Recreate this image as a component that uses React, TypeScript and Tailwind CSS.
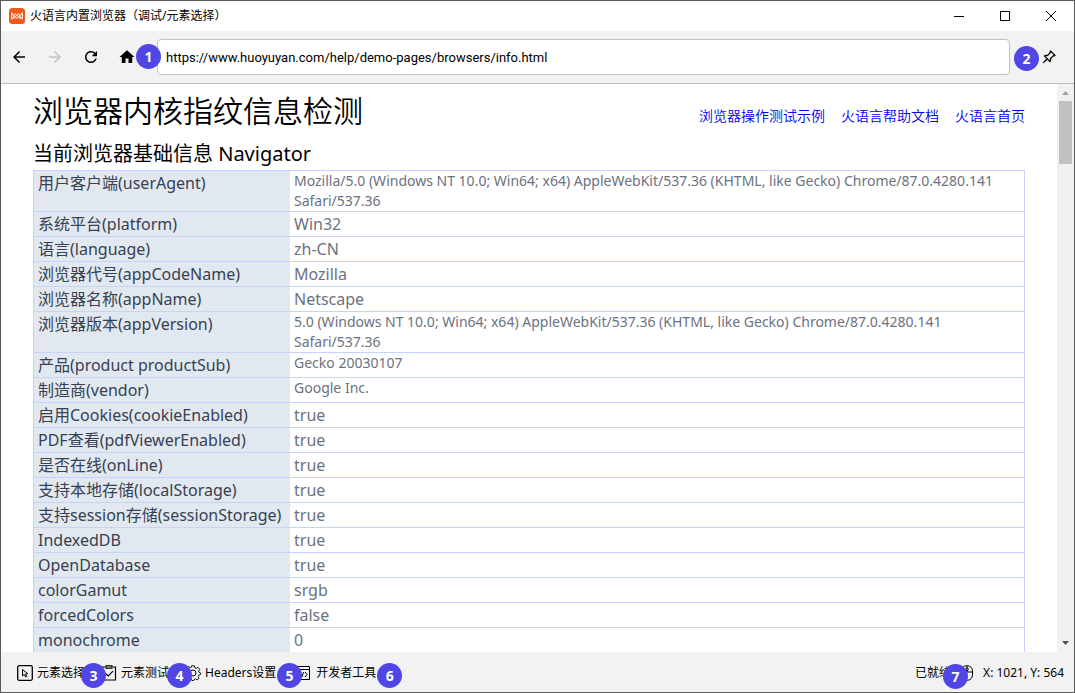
import type { ReactNode } from "react";
import { MdArrowBack, MdArrowForward, MdHome, MdRefresh } from "react-icons/md";
import { BsPinAngle } from "react-icons/bs";

type Row = { label: string; value: string; small?: boolean };

const rows: Row[] = [
  { label: "用户客户端(userAgent)", value: "Mozilla/5.0 (Windows NT 10.0; Win64; x64) AppleWebKit/537.36 (KHTML, like Gecko) Chrome/87.0.4280.141 Safari/537.36", small: true },
  { label: "系统平台(platform)", value: "Win32" },
  { label: "语言(language)", value: "zh-CN" },
  { label: "浏览器代号(appCodeName)", value: "Mozilla" },
  { label: "浏览器名称(appName)", value: "Netscape" },
  { label: "浏览器版本(appVersion)", value: "5.0 (Windows NT 10.0; Win64; x64) AppleWebKit/537.36 (KHTML, like Gecko) Chrome/87.0.4280.141 Safari/537.36", small: true },
  { label: "产品(product productSub)", value: "Gecko 20030107", small: true },
  { label: "制造商(vendor)", value: "Google Inc.", small: true },
  { label: "启用Cookies(cookieEnabled)", value: "true" },
  { label: "PDF查看(pdfViewerEnabled)", value: "true" },
  { label: "是否在线(onLine)", value: "true" },
  { label: "支持本地存储(localStorage)", value: "true" },
  { label: "支持session存储(sessionStorage)", value: "true" },
  { label: "IndexedDB", value: "true" },
  { label: "OpenDatabase", value: "true" },
  { label: "colorGamut", value: "srgb" },
  { label: "forcedColors", value: "false" },
  { label: "monochrome", value: "0" },
];

function Badge({ n, className }: { n: number; className: string }) {
  return (
    <span className={`absolute z-10 flex size-[25px] items-center justify-center rounded-full bg-[#4f46e5] font-['Open_Sans',sans-serif] text-sm leading-none font-bold text-white ${className}`}>
      {n}
    </span>
  );
}

function Logo() {
  return (
    <svg className="size-4" viewBox="0 0 16 16" aria-hidden="true">
      <rect width="16" height="16" rx="3.5" fill="#ee5a1c" />
      <path d="M2.6 11V4.8L8 10.4L13.4 4.8V11M4.9 11V7.4M11.1 11V7.4M2.6 11L4.9 9M13.4 11L11.1 9M6 5.4L8 7.6L10 5.4" fill="none" stroke="#ffe3d3" strokeWidth="1.1" strokeLinejoin="round" />
    </svg>
  );
}

function TitleBar() {
  return (
    <header className="flex h-[30px] shrink-0 items-center bg-white pl-2">
      <Logo />
      <h1 className="grow pl-[5px] text-xs">火语言内置浏览器（调试/元素选择）</h1>
      <div className="flex h-full">
        <button aria-label="最小化" className="flex w-[46px] items-center justify-center">
          <svg className="size-[10px]" viewBox="0 0 10 10"><path d="M0 5.5H10" stroke="#000" /></svg>
        </button>
        <button aria-label="最大化" className="flex w-[46px] items-center justify-center">
          <svg className="size-[10px]" viewBox="0 0 10 10"><path d="M.5 .5H9.5V9.5H.5Z" fill="none" stroke="#000" /></svg>
        </button>
        <button aria-label="关闭" className="flex w-[46px] items-center justify-center">
          <svg className="size-[10px]" viewBox="0 0 10 10"><path d="M0 0L10 10M10 0L0 10" stroke="#000" /></svg>
        </button>
      </div>
    </header>
  );
}

function AddressBar() {
  return (
    <nav className="flex h-[53px] shrink-0 items-center border-b border-[#bdbdbd] px-[9px]">
      <div className="flex gap-[18px]">
        <button aria-label="后退"><MdArrowBack size={18} /></button>
        <button aria-label="前进" disabled className="text-[#c4c4c4]"><MdArrowForward size={18} /></button>
        <button aria-label="刷新"><MdRefresh size={18} /></button>
        <button aria-label="主页"><MdHome size={18} /></button>
      </div>
      <div className="relative ml-[21px] grow">
        <Badge n={1} className="-left-[21px] top-[5px]" />
        <input
          aria-label="网址"
          defaultValue="https://www.huoyuyan.com/help/demo-pages/browsers/info.html"
          className="block h-9 w-full rounded-[4px] border border-[#c2c2c2] bg-white px-2 font-['Roboto',sans-serif] text-[13px] outline-none"
        />
      </div>
      <button aria-label="固定窗口" className="relative ml-8 mr-[9px]">
        <Badge n={2} className="-left-[28px] -top-1" />
        <BsPinAngle size={14} strokeWidth={0.6} />
      </button>
    </nav>
  );
}

function InfoPage() {
  return (
    <main className="min-w-0 grow overflow-hidden px-8 pt-[7px]">
      <div className="flex items-start justify-between">
        <h2 className="text-3xl leading-[40px] font-[350]">浏览器内核指纹信息检测</h2>
        <div className="flex gap-4 pt-[15px] text-sm font-[350] text-[#0000ee]">
          <a href="#examples">浏览器操作测试示例</a>
          <a href="#docs">火语言帮助文档</a>
          <a href="#home">火语言首页</a>
        </div>
      </div>
      <h3 className="pt-2 pb-px text-xl leading-[30px]">当前浏览器基础信息 Navigator</h3>
      <table className="w-full border-separate border-spacing-0 border-x border-t border-[#c7d2fe] text-left text-base leading-6">
        <tbody>
          {rows.map((row) => (
            <tr key={row.label}>
              <th scope="row" className="w-64 border-b border-[#c7d2fe] bg-[#e2e8f0] px-1 py-0 align-top font-normal whitespace-nowrap text-[#374151]">{row.label}</th>
              <td className={`border-b border-[#c7d2fe] px-1 py-0 align-top text-[#6b7280] ${row.small ? "text-sm leading-5" : ""}`}>{row.value}</td>
            </tr>
          ))}
        </tbody>
      </table>
    </main>
  );
}

function ScrollBar() {
  return (
    <div aria-hidden="true" className="flex w-[17px] shrink-0 flex-col items-center bg-[#f1f1f1]">
      <svg className="h-[17px] w-[17px]" viewBox="0 0 17 17"><path d="M5 11L8.5 7L12 11Z" fill="#a3a3a3" /></svg>
      <div className="h-[63px] w-[13px] bg-[#c1c1c1]" />
      <svg className="mt-auto h-[17px] w-[17px]" viewBox="0 0 17 17"><path d="M5 6L8.5 10L12 6Z" fill="#505050" /></svg>
    </div>
  );
}

function Tool({ icon, label, badge }: { icon: ReactNode; label: string; badge: ReactNode }) {
  return (
    <button className="relative flex items-center gap-1 whitespace-nowrap">
      {icon}
      {label}
      {badge}
    </button>
  );
}

function StatusBar() {
  const icon = "size-4 fill-none stroke-black";
  return (
    <footer className="flex h-10 shrink-0 items-center pt-0.5 pl-4 pr-[10px] text-xs">
      <div className="flex gap-4">
        <Tool
          label="元素选择"
          badge={<Badge n={3} className="left-16 -top-0.5" />}
          icon={<svg className={icon} viewBox="0 0 16 16"><rect x=".7" y=".7" width="14.6" height="14.6" rx="1.5" strokeWidth="1.3" /><path d="M5.5 4.5V11L7.2 9.4L8.6 12L9.8 11.4L8.5 9L10.8 8.7Z" /></svg>}
        />
        <Tool
          label="元素测试"
          badge={<Badge n={4} className="left-[66px] -top-0.5" />}
          icon={<svg className={icon} viewBox="0 0 16 16"><path d="M4 2H1.5V15H14.5V2H12M5 .8H11V3.2H5ZM4.5 8.5L7.2 11L12 6.2" strokeWidth="1.2" /></svg>}
        />
        <Tool
          label="Headers设置"
          badge={<Badge n={5} className="left-[92px] -top-0.5" />}
          icon={<svg className={icon} viewBox="0 0 16 16"><path d="M6.7.8H9.3L9.8 2.8L11.2 3.4L13 2.3L14.8 4.2L13.6 6L14 7.3L15.6 8V9.5L13.8 10.2L13.2 11.4L14 13.2L12.2 14.8L10.4 13.8L9.4 14.2L8.8 15.5H6.8L6.2 13.9L5 13.3L3.2 14.1L1.5 12.4L2.4 10.6L2 9.3L.5 8.7V6.8L2.2 6.2L2.8 5L2 3.2L3.8 1.6L5.3 2.7L6.4 2.3Z" strokeWidth=".9" /><circle cx="8" cy="8" r="3" /></svg>}
        />
        <Tool
          label="开发者工具"
          badge={<Badge n={6} className="left-[85px] -top-0.5" />}
          icon={<svg className="mx-0.5 size-4 fill-none stroke-black" viewBox="0 0 16 16"><path d="M1 1.5H15.5V14.5H1ZM1 4.5H15.5M6.5 7L4.5 9.5L6.5 12M11 7L13 9.5L11 12M9.5 7L8 12" /></svg>}
        />
      </div>
      <div className="relative ml-auto flex items-center gap-2 whitespace-nowrap">
        <span>已就绪</span>
        <Badge n={7} className="left-[28px] -top-px" />
        <svg className={icon} viewBox="0 0 16 16"><rect x="2.5" y=".7" width="11" height="14.6" rx="5.2" /><path d="M2.5 7H13.5M8 .7V3M8 5.5V7M7 3H9V5.5H7Z" /></svg>
        <span>X: 1021, Y: 564</span>
      </div>
    </footer>
  );
}

export default function App() {
  return (
    <div className="flex h-screen flex-col overflow-hidden border border-[#5a5a5a] bg-[#f2f2f2] font-['Noto_Sans','Noto_Sans_CJK_SC',sans-serif] text-black">
      <TitleBar />
      <AddressBar />
      <div className="flex min-h-0 grow bg-white">
        <InfoPage />
        <ScrollBar />
      </div>
      <StatusBar />
    </div>
  );
}
